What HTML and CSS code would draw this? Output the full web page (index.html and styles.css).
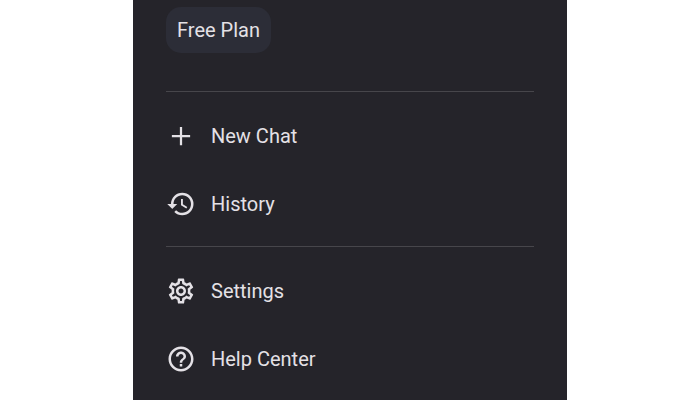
FILE: index.html
```
<!DOCTYPE html>
<html lang="en">
<head>
    <meta charset="UTF-8">
    <meta name="viewport" content="width=device-width, initial-scale=1.0">
    <title>Menu</title>
    <link rel="stylesheet" href="styles.css">
</head>
<body>
    <aside class="drawer">
        <!-- current plan -->
        <div class="plan">
            <span class="plan-badge">Free Plan</span>
        </div>

        <!-- chat links -->
        <nav class="menu" aria-label="Chat">
            <a class="menu-item" href="#new">
                <svg class="icon" viewBox="0 0 24 24" aria-hidden="true"><path d="M19.3 12.9h-6.4v6.4h-1.8v-6.4H4.7v-1.8h6.4V4.7h1.8v6.4h6.4z"/></svg>
                New Chat
            </a>
            <a class="menu-item" href="#history">
                <svg class="icon" viewBox="0 0 24 24" aria-hidden="true"><path d="M13 3a9 9 0 0 0-9 9H1l3.89 3.89.07.14L9 12H6c0-3.87 3.13-7 7-7s7 3.13 7 7-3.13 7-7 7c-1.93 0-3.68-.79-4.94-2.06l-1.42 1.42A8.954 8.954 0 0 0 13 21a9 9 0 0 0 0-18zm-1 5v5l4.28 2.54.72-1.21-3.5-2.08V8H12z"/></svg>
                History
            </a>
        </nav>

        <!-- app links -->
        <nav class="menu" aria-label="App">
            <a class="menu-item" href="#settings">
                <svg class="icon" viewBox="0 0 24 24" aria-hidden="true"><path d="M19.43 12.98c.04-.32.07-.64.07-.98 0-.34-.03-.66-.07-.98l2.11-1.65c.19-.15.24-.42.12-.64l-2-3.46c-.09-.16-.26-.25-.44-.25-.06 0-.12.01-.17.03l-2.49 1c-.52-.4-1.08-.73-1.69-.98l-.38-2.65C14.46 2.18 14.25 2 14 2h-4c-.25 0-.46.18-.49.42l-.38 2.65c-.61.25-1.17.59-1.69.98l-2.49-1c-.06-.02-.12-.03-.18-.03-.17 0-.34.09-.43.25l-2 3.46c-.13.22-.07.49.12.64l2.11 1.65c-.04.32-.07.65-.07.98 0 .33.03.66.07.98l-2.11 1.65c-.19.15-.24.42-.12.64l2 3.46c.09.16.26.25.44.25.06 0 .12-.01.17-.03l2.49-1c.52.4 1.08.73 1.69.98l.38 2.65c.03.24.24.42.49.42h4c.25 0 .46-.18.49-.42l.38-2.65c.61-.25 1.17-.59 1.69-.98l2.49 1c.06.02.12.03.18.03.17 0 .34-.09.43-.25l2-3.46c.12-.22.07-.49-.12-.64l-2.11-1.65zm-1.98-1.71c.04.31.05.52.05.73 0 .21-.02.43-.05.73l-.14 1.13.89.7 1.08.84-.7 1.21-1.27-.51-1.04-.42-.9.68c-.43.32-.84.56-1.25.73l-1.06.43-.16 1.13-.2 1.35h-1.4l-.19-1.35-.16-1.13-1.06-.43c-.43-.18-.83-.41-1.23-.71l-.91-.7-1.06.43-1.27.51-.7-1.21 1.08-.84.89-.7-.14-1.13c-.03-.31-.05-.54-.05-.74s.02-.43.05-.73l.14-1.13-.89-.7-1.08-.84.7-1.21 1.27.51 1.04.42.9-.68c.43-.32.84-.56 1.25-.73l1.06-.43.16-1.13.2-1.35h1.39l.19 1.35.16 1.13 1.06.43c.43.18.83.41 1.23.71l.91.7 1.06-.43 1.27-.51.7 1.21-1.07.85-.89.7.14 1.13zM12 8c-2.21 0-4 1.79-4 4s1.79 4 4 4 4-1.79 4-4-1.79-4-4-4zm0 6c-1.1 0-2-.9-2-2s.9-2 2-2 2 .9 2 2-.9 2-2 2z"/></svg>
                Settings
            </a>
            <a class="menu-item" href="#help">
                <svg class="icon" viewBox="0 0 24 24" aria-hidden="true"><path d="M11 18h2v-2h-2v2zm1-16C6.48 2 2 6.48 2 12s4.48 10 10 10 10-4.48 10-10S17.52 2 12 2zm0 18c-4.41 0-8-3.59-8-8s3.59-8 8-8 8 3.59 8 8-3.59 8-8 8zm0-14c-2.21 0-4 1.79-4 4h2c0-1.1.9-2 2-2s2 .9 2 2c0 2-3 1.75-3 5h2c0-2.25 3-2.5 3-5 0-2.21-1.79-4-4-4z"/></svg>
                Help Center
            </a>
        </nav>
    </aside>
</body>
</html>
```
FILE: styles.css
```
* {
    box-sizing: border-box;
    margin: 0;
    padding: 0;
}
body {
    background: #fff;
    font-family: Roboto, "Liberation Sans", sans-serif;
    font-size: 20px;
    line-height: 24px;
    color: #e4e1e6;
}

.drawer {
    margin: 0 auto;
    padding: 7px 33px 0;
    width: 62%;
    min-height: 100vh;
    background: #25242a;
}
.plan {
    display: flex;
    padding-bottom: 38px;
}
.plan-badge {
    padding: 11px;
    background: #2c2d37;
    border-radius: 15px;
}

.menu {
    padding: 10px 0 8px;
    border-top: 1px solid #47464b;
}
.menu:last-child {
    padding-bottom: 0;
}
.menu-item {
    display: flex;
    align-items: center;
    gap: 15px;
    height: 68px;
    color: inherit;
    text-decoration: none;
}
.icon {
    flex: none;
    width: 30px;
    height: 30px;
    fill: currentColor;
}
```
